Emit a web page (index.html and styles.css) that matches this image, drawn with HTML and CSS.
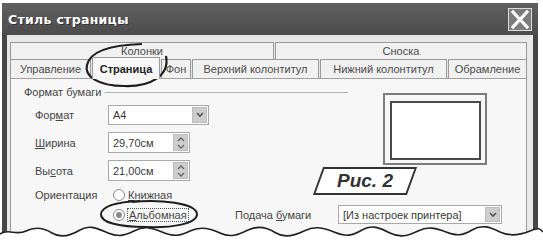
FILE: index.html
```html
<!DOCTYPE html>
<html lang="ru">
<head>
    <meta charset="UTF-8">
    <title>Стиль страницы</title>
    <link rel="stylesheet" href="styles.css">
</head>
<body>
    <div class="window">
        <div class="titlebar">
            <span class="title">Стиль страницы</span>
            <span class="close">
                <svg width="22" height="21" viewBox="0 0 22 21"><path d="M4 3 L18 18 M18 3 L4 18" stroke="#fff" stroke-width="3.2" stroke-linecap="square"/></svg>
            </span>
        </div>
        <div class="client">
            <div class="tabrow row1">
                <div class="tab t-cols">Колонки</div>
                <div class="tab t-note">Сноска</div>
            </div>
            <div class="tabrow row2">
                <div class="tab t-ctrl">Управление</div>
                <div class="tab t-page active">Страница</div>
                <div class="tab t-bg">Фон</div>
                <div class="tab t-head">Верхний колонтитул</div>
                <div class="tab t-foot">Нижний колонтитул</div>
                <div class="tab t-border">Обрамление</div>
            </div>
            <div class="panel">
                <div class="top">
                    <div class="paper">
                        <div class="legend"><span>Формат бумаги</span><i class="rule"></i></div>
                        <div class="fields">
                            <label>Фор<u>м</u>ат</label>
                            <div class="combo fmt">A4<span class="drop"><svg width="8" height="6" viewBox="0 0 8 6"><path d="M1 1 L4 4 L7 1" fill="none" stroke="#555" stroke-width="1.6"/></svg></span></div>
                            <label><u>Ш</u>ирина</label>
                            <div class="spin">29,70см<span class="spinbtn"><svg width="8" height="12" viewBox="0 0 8 12"><path d="M1 4 L4 1 L7 4 M1 8 L4 11 L7 8" fill="none" stroke="#666" stroke-width="1.3"/></svg></span></div>
                            <label>Вы<u>с</u>ота</label>
                            <div class="spin">21,00см<span class="spinbtn"><svg width="8" height="12" viewBox="0 0 8 12"><path d="M1 4 L4 1 L7 4 M1 8 L4 11 L7 8" fill="none" stroke="#666" stroke-width="1.3"/></svg></span></div>
                            <label>Ориентация</label>
                            <div class="radio"><span class="dot"></span><u>К</u>нижная</div>
                        </div>
                    </div>
                    <div class="preview"><div class="sheet"></div></div>
                </div>
                <div class="bottom">
                    <div class="radio alb"><span class="dot on"></span><span class="focus"><u>А</u>льбомная</span></div>
                    <label class="feed">Подача <u>б</u>умаги</label>
                    <div class="combo tray">[Из настроек принтера]<span class="drop"><svg width="8" height="6" viewBox="0 0 8 6"><path d="M1 1 L4 4 L7 1" fill="none" stroke="#555" stroke-width="1.6"/></svg></span></div>
                </div>
            </div>
        </div>
    </div>

    <svg class="marks" width="543" height="242" viewBox="0 0 543 242">
        <path d="M166 56 C170 76, 150 87, 124 86 C98 86, 84 76, 87 65 C90 52, 108 45, 142 44" fill="none" stroke="#1e1e1e" stroke-width="2.2"/>
        <path d="M132 202 C160 199, 196 203, 197 214 C197 224, 172 228, 146 227 C118 227, 100 222, 101 214 C102 206, 116 202, 140 201" fill="none" stroke="#1e1e1e" stroke-width="2"/>
        <path d="M0 234 C8 228, 16 236, 26 231 S44 228, 52 233 S70 236, 80 230 S98 229, 108 233 S124 236, 134 231 S150 227, 162 232 S180 236, 190 231 S210 228, 220 233 S238 235, 248 230 S268 228, 276 233 S294 236, 304 231 S322 227, 334 232 S352 236, 362 230 S380 228, 390 233 S408 236, 418 231 S436 228, 446 232 S462 236, 472 230 S490 227, 500 232 S520 235, 530 231 S540 229, 543 232 L543 242 L0 242 Z" fill="#fff"/>
        <path d="M0 234 C8 228, 16 236, 26 231 S44 228, 52 233 S70 236, 80 230 S98 229, 108 233 S124 236, 134 231 S150 227, 162 232 S180 236, 190 231 S210 228, 220 233 S238 235, 248 230 S268 228, 276 233 S294 236, 304 231 S322 227, 334 232 S352 236, 362 230 S380 228, 390 233 S408 236, 418 231 S436 228, 446 232 S462 236, 472 230 S490 227, 500 232 S520 235, 530 231 S540 229, 543 232" fill="none" stroke="#222" stroke-width="1.6"/>
    </svg>

    <div class="fig"><span>Рис. 2</span></div>
</body>
</html>
```

FILE: styles.css
```css
* {
    box-sizing: border-box;
}

body {
    margin: 0;
    width: 543px;
    height: 242px;
    overflow: hidden;
    position: relative;
    background: #fff;
    font-family: "Liberation Sans", Arial, sans-serif;
    font-size: 11px;
    color: #444;
}

u {
    text-decoration: underline;
    text-underline-offset: 1px;
}

.window {
    margin: 3px 0 0 2px;
    width: 536px;
    height: 239px;
    background: #464646;
    display: flex;
    flex-direction: column;
}

.titlebar {
    height: 32px;
    flex: none;
    display: flex;
    align-items: center;
    justify-content: space-between;
    padding: 0 6px 0 6px;
    background: linear-gradient(#606060, #4c4c4c);
}

.title {
    font-family: "DejaVu Sans", sans-serif;
    font-weight: bold;
    font-size: 12.5px;
    letter-spacing: 0.3px;
    color: #fff;
    text-shadow: 1px 1px 0 #333;
}

.close {
    width: 24px;
    height: 23px;
    margin-top: 1px;
    border: 1px solid #dcdcdc;
    background: #7c7c7c;
    display: flex;
    align-items: center;
    justify-content: center;
}

.client {
    flex: 1;
    min-height: 0;
    margin: 0 5px;
    background: #e8e8e8;
    padding: 7px 6px 0 3px;
    display: flex;
    flex-direction: column;
}

.tabrow {
    display: flex;
    gap: 1px;
    flex: none;
}

.tab {
    border: 1px solid #9a9a9a;
    border-bottom: none;
    background: #f1f1f1;
    display: flex;
    align-items: center;
    justify-content: center;
    white-space: nowrap;
    color: #4a4a4a;
}

.row1 .tab {
    height: 17px;
}

.row2 {
    height: 19px;
    align-items: flex-start;
}

.row2 .tab {
    height: 19px;
}

.t-cols { width: 264px; }
.t-note { width: 252px; }
.t-ctrl { width: 81px; }
.t-page { width: 68px; }
.t-bg { width: 30px; }
.t-head { width: 127px; }
.t-foot { width: 127px; }
.t-border { width: 79px; }

.row2 .tab.active {
    height: 22px;
    margin-top: -2px;
    position: relative;
    z-index: 1;
    background: #f7f7f7;
    font-weight: bold;
    color: #222;
}

.panel {
    flex: 1;
    background: #f7f7f7;
    border: 1px solid #a0a0a0;
    border-bottom: none;
    padding: 6px 0 0 13px;
}

.top {
    display: flex;
    align-items: flex-start;
}

.paper {
    width: 324px;
}

.legend {
    display: flex;
    align-items: center;
    height: 14px;
}

.legend .rule {
    flex: 1;
    height: 1px;
    margin-left: 4px;
    background: #b4b4b4;
}

.fields {
    display: grid;
    grid-template-columns: 73px auto;
    grid-template-rows: 20px 21px 21px 14px;
    row-gap: 7px;
    margin: 6px 0 0 11px;
    align-items: center;
    justify-items: start;
}

.combo, .spin {
    height: 20px;
    border: 1px solid #a9a9a9;
    background: #fff;
    display: flex;
    align-items: center;
    justify-content: space-between;
    padding-left: 4px;
    color: #3a3a3a;
}

.combo.fmt {
    width: 101px;
}

.spin {
    width: 82px;
    height: 21px;
}

.drop, .spinbtn {
    width: 15px;
    height: 16px;
    margin-right: 1px;
    background: #cdcdcd;
    border: 1px solid #bdbdbd;
    display: flex;
    align-items: center;
    justify-content: center;
}

.spinbtn {
    height: 17px;
}

.radio {
    display: flex;
    align-items: center;
    margin-left: 5px;
}

.dot {
    width: 12px;
    height: 12px;
    border-radius: 50%;
    border: 1px solid #8a8a8a;
    background: #fff;
    margin-right: 3px;
    display: flex;
    align-items: center;
    justify-content: center;
}

.dot.on::after {
    content: "";
    width: 6px;
    height: 6px;
    border-radius: 50%;
    background: #8a8a8a;
}

.preview {
    margin: 8px 0 0 35px;
    width: 104px;
    height: 72px;
    border: 2px solid #7d7d7d;
    padding: 6px 4px 3px 5px;
}

.sheet {
    width: 100%;
    height: 100%;
    border: 2px solid #4a4a4a;
    background: #fff;
}

.bottom {
    display: flex;
    align-items: center;
    height: 19px;
    margin-top: 3px;
    padding-left: 84px;
}

.radio.alb {
    width: 122px;
}

.focus {
    outline: 1px dotted #555;
    padding: 0 1px;
}

.feed {
    width: 103px;
}

.combo.tray {
    width: 164px;
    height: 19px;
}

.tray .drop {
    height: 15px;
}

.marks {
    position: absolute;
    top: 0;
    left: 0;
    pointer-events: none;
}

.fig {
    position: absolute;
    left: 318px;
    top: 167px;
    width: 94px;
    height: 28px;
    border: 2px solid #333;
    background: #fff;
    transform: skewX(-20deg);
    display: flex;
    align-items: center;
    justify-content: center;
}

.fig span {
    transform: skewX(20deg);
    font-family: "Liberation Sans", Arial, sans-serif;
    font-style: italic;
    font-weight: bold;
    font-size: 19px;
    color: #333;
}
```
